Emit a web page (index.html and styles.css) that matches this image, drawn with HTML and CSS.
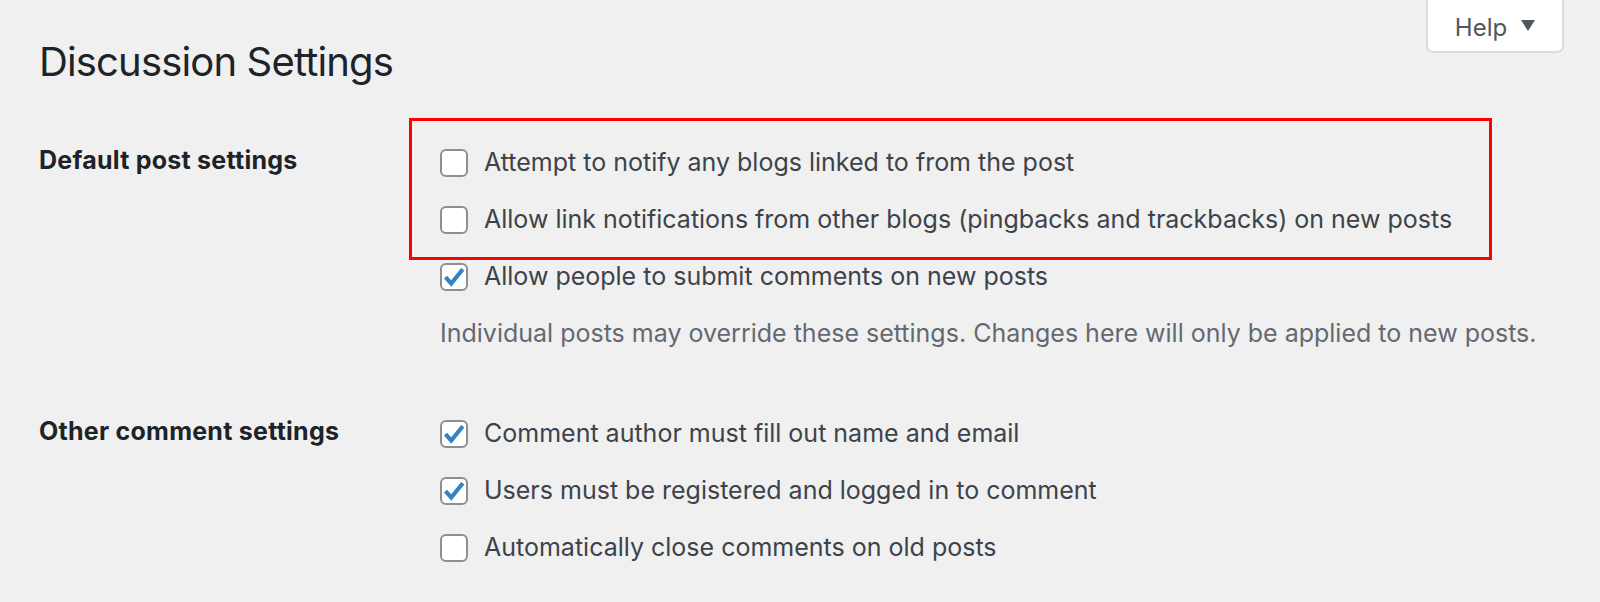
FILE: index.html
```html
<!DOCTYPE html>
<html lang="en">
<head>
<meta charset="utf-8">
<title>Discussion Settings</title>
<link rel="stylesheet" href="styles.css">
</head>
<body>
<div class="wrap">
  <header class="page-head">
    <h1 class="title">Discussion Settings</h1>
    <button class="help" type="button">Help <span class="caret"></span></button>
  </header>

  <section class="form-row first">
    <div class="row-label">Default post settings</div>
    <div class="options">
      <div class="highlight"></div>
      <label class="opt"><span class="cb"></span><span>Attempt to notify any blogs linked to from the post</span></label>
      <label class="opt"><span class="cb"></span><span>Allow link notifications from other blogs (pingbacks and trackbacks) on new posts</span></label>
      <label class="opt"><span class="cb checked"><svg viewBox="0 0 28 28"><path d="M5.5 14.2 L11.2 20.5 L22.8 6.2"/></svg></span><span>Allow people to submit comments on new posts</span></label>
      <p class="desc">Individual posts may override these settings. Changes here will only be applied to new posts.</p>
    </div>
  </section>

  <section class="form-row second">
    <div class="row-label">Other comment settings</div>
    <div class="options">
      <label class="opt"><span class="cb checked"><svg viewBox="0 0 28 28"><path d="M5.5 14.2 L11.2 20.5 L22.8 6.2"/></svg></span><span>Comment author must fill out name and email</span></label>
      <label class="opt"><span class="cb checked"><svg viewBox="0 0 28 28"><path d="M5.5 14.2 L11.2 20.5 L22.8 6.2"/></svg></span><span>Users must be registered and logged in to comment</span></label>
      <label class="opt"><span class="cb"></span><span>Automatically close comments on old posts</span></label>
    </div>
  </section>
</div>
</body>
</html>
```

FILE: styles.css
```css
html, body {
  margin: 0;
  padding: 0;
  background: #f0f0f1;
}

body {
  font-family: Inter, "Open Sans", "Liberation Sans", sans-serif;
  color: #3c434a;
  overflow: hidden;
}

.wrap {
  padding: 0 36px 0 39px;
}

.page-head {
  display: flex;
  justify-content: space-between;
  align-items: flex-start;
}

.title {
  margin: 35px 0 0 0;
  font-size: 40px;
  line-height: 54px;
  font-weight: 400;
  color: #1d2327;
  letter-spacing: -0.85px;
}

.help {
  width: 138px;
  height: 53px;
  margin: 0;
  padding: 3px 0 0 0;
  background: #fff;
  border: 2px solid #dcdcde;
  border-top: none;
  border-radius: 0 0 7px 7px;
  font-family: inherit;
  font-size: 24px;
  color: #50575e;
  display: flex;
  align-items: center;
  justify-content: center;
  gap: 14px;
}

.caret {
  display: inline-block;
  width: 0;
  height: 0;
  border-left: 7px solid transparent;
  border-right: 7px solid transparent;
  border-top: 11px solid #50575e;
  margin-top: -3px;
}

.form-row {
  display: grid;
  grid-template-columns: 401px 1fr;
}

.form-row.first {
  margin-top: 45px;
}

.form-row.second {
  margin-top: 43px;
}

.row-label {
  font-size: 25px;
  font-weight: 700;
  color: #1d2327;
  line-height: 57px;
  margin-top: -2px;
  letter-spacing: 0.25px;
}

.options {
  position: relative;
}

.opt {
  display: flex;
  align-items: center;
  gap: 16px;
  height: 57px;
  font-size: 25px;
  line-height: 57px;
  color: #3c434a;
}

.cb {
  flex: none;
  box-sizing: border-box;
  width: 28px;
  height: 28px;
  border: 2px solid #8c8f94;
  border-radius: 6px;
  background: #fff;
  display: flex;
  align-items: center;
  justify-content: center;
}

.cb svg {
  width: 28px;
  height: 28px;
  margin: -2px;
  flex: none;
}

.cb svg path {
  fill: none;
  stroke: #3582c4;
  stroke-width: 4.2;
  stroke-linecap: butt;
  stroke-linejoin: miter;
}

.desc {
  margin: 0;
  height: 57px;
  line-height: 57px;
  font-size: 25px;
  color: #646970;
}

.highlight {
  position: absolute;
  left: -31px;
  top: -16px;
  width: 1083px;
  height: 142px;
  box-sizing: border-box;
  border: 3px solid #ff0000;
  pointer-events: none;
}
```
